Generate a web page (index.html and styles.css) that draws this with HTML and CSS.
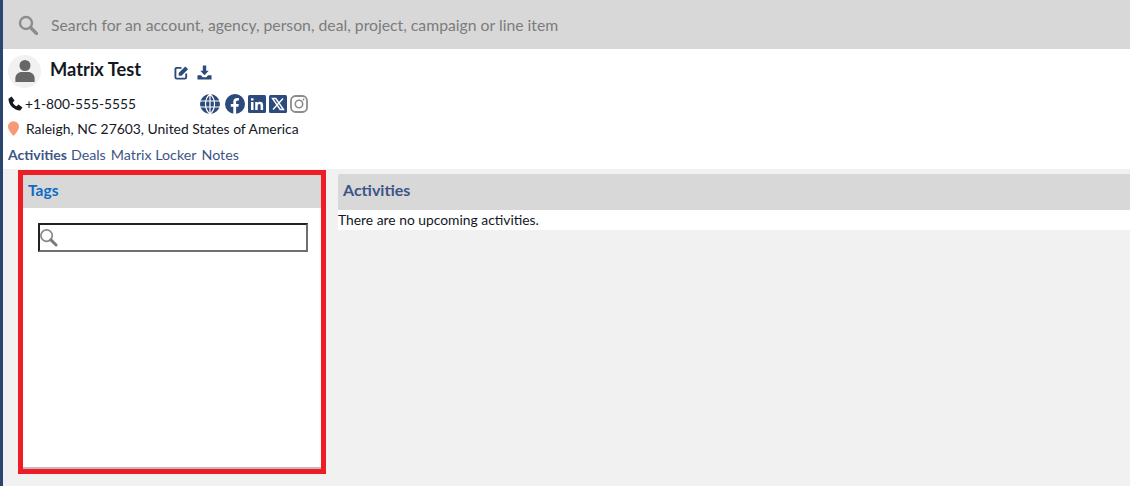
FILE: index.html
```html
<!DOCTYPE html>
<html lang="en">
<head>
<meta charset="utf-8">
<title>Matrix Test</title>
<link rel="stylesheet" href="styles.css">
</head>
<body>
<div class="shell">
  <div class="searchbar">
    <svg class="search-icon" viewBox="0 0 20 20" width="20" height="20"><circle cx="8" cy="8" r="6" fill="none" stroke="#8c8c8c" stroke-width="2.4"/><path d="M12.5 12.5L18.5 18.5" stroke="#8c8c8c" stroke-width="3.2" stroke-linecap="round"/></svg>
    <span class="search-text">Search for an account, agency, person, deal, project, campaign or line item</span>
  </div>
  <div class="profile">
    <div class="name-row">
      <div class="avatar">
        <svg viewBox="0 0 24 26" width="22" height="24"><circle cx="12" cy="7" r="6" fill="#666"/><path d="M1.5 25v-4c0-4.500 3.500-7 7-7h7c3.500 0 7 2.500 7 7v4z" fill="#666"/></svg>
      </div>
      <h1 class="name">Matrix Test</h1>
      <div class="actions">
        <svg viewBox="0 0 16 16" width="15" height="15"><path d="M8 3H3a1.500 1.500 0 0 0-1.500 1.500v8.500A1.500 1.500 0 0 0 3 14.500h8.500A1.500 1.500 0 0 0 13 13V9" fill="none" stroke="#2c4a7c" stroke-width="2"/><path d="M5 8.500L12 1.500l3 3L8 11.500H5z" fill="#2c4a7c"/></svg>
        <svg viewBox="0 0 16 16" width="15" height="15"><path d="M6.200 .5h3.600v5.500h2.700L8 10.800 3.500 6h2.700z" fill="#2c4a7c"/><path d="M.5 11h3.800L6 13h4l1.700-2h3.800v4.500H.5z" fill="#2c4a7c"/></svg>
      </div>
    </div>
    <div class="contact-row">
      <div class="phone">
        <svg viewBox="0 0 16 16" width="15" height="15"><path d="M.5 3L3.800.5l3.200 4.300-2 2c.8 1.800 2.400 3.400 4.200 4.200l2-2 4.300 3.200-2.500 3.300C6.500 15.500.5 9.500.5 3z" fill="#14181f"/></svg>
        <span>+1-800-555-5555</span>
      </div>
      <div class="socials">
        <svg class="globe" viewBox="0 0 20 20" width="20" height="20"><circle cx="10" cy="10" r="10" fill="#2c4a7c"/><path d="M0 7h20M0 13h20M10 0v20M10 0c-6 5-6 15 0 20M10 0c6 5 6 15 0 20" fill="none" stroke="#fff" stroke-width="1.200"/></svg>
        <svg viewBox="0 0 20 20" width="20" height="20"><circle cx="10" cy="10" r="10" fill="#2c4a7c"/><path d="M8.300 20v-7.300H5.800V10h2.500V7.800c0-2.500 1.500-3.800 3.700-3.800 1 0 1.900.1 1.900.1v2.400h-1.200c-1.200 0-1.600.8-1.600 1.500V10h2.700l-.5 2.700h-2.200V20z" fill="#fff"/></svg>
        <svg viewBox="0 0 18 18" width="18" height="18"><rect width="18" height="18" rx="1.500" fill="#2c4a7c"/><path d="M3 7h2.500v8H3zM3 3.200h2.500v2.300H3zM7.200 7h2.400v1.100c.5-.8 1.400-1.300 2.500-1.300 2.300 0 3 1.500 3 3.700V15h-2.500v-4c0-1.100-.3-2-1.300-2-1.100 0-1.600.9-1.600 2v4H7.200z" fill="#fff"/></svg>
        <svg viewBox="0 0 18 18" width="18" height="18"><rect width="18" height="18" rx="1.500" fill="#2c4a7c"/><path d="M3.500 3.500h3.300l7.700 11h-3.300zM14 3.500L4 14.500" fill="none" stroke="#fff" stroke-width="1.400"/></svg>
        <svg viewBox="0 0 18 18" width="18" height="18"><rect x="1" y="1" width="16" height="16" rx="4.500" fill="none" stroke="#8c8c8c" stroke-width="1.800"/><circle cx="9" cy="9" r="3.700" fill="none" stroke="#8c8c8c" stroke-width="1.600"/><circle cx="13.500" cy="4.500" r="1" fill="#8c8c8c"/></svg>
      </div>
    </div>
    <div class="address-row">
      <svg viewBox="0 0 12 16" width="11" height="15"><path d="M6 0a6 6 0 0 1 6 6c0 3.500-4 8-6 10-2-2-6-6.500-6-10a6 6 0 0 1 6-6z" fill="#f79a78"/></svg>
      <span>Raleigh, NC 27603, United States of America</span>
    </div>
    <nav class="tabs">
      <a class="tab active">Activities</a>
      <a class="tab">Deals</a>
      <a class="tab">Matrix Locker</a>
      <a class="tab">Notes</a>
    </nav>
  </div>
  <div class="content">
    <section class="tags-frame">
      <div class="tags-card">
        <h2 class="tags-title">Tags</h2>
        <div class="tags-body">
          <div class="tag-input">
            <svg class="tag-icon" viewBox="0 0 20 20" width="19" height="19"><circle cx="8" cy="8" r="6" fill="none" stroke="#8a8a8a" stroke-width="1.800"/><path d="M12.500 12.500L18 18" stroke="#7a7a7a" stroke-width="3" stroke-linecap="round"/></svg>
          </div>
        </div>
      </div>
    </section>
    <section class="activities">
      <h2 class="activities-title">Activities</h2>
      <p class="activities-empty">There are no upcoming activities.</p>
    </section>
  </div>
</div>
</body>
</html>
```
FILE: styles.css
```css
* { box-sizing: border-box; }
html, body { margin: 0; padding: 0; background: #fff; }
body { font-family: Lato, "Open Sans", sans-serif; color: #111; overflow: hidden; }
.shell { width: 1130px; height: 486px; border-left: 3px solid #2c4570; display: flex; flex-direction: column; }
.searchbar { height: 49px; flex: none; background: #d8d8d8; display: flex; align-items: center; padding-left: 15px; gap: 13px; }
.search-icon { flex: none; }
.search-text { font-size: 15.750px; color: #7c7c7c; }
.profile { height: 120px; flex: none; background: #fff; padding: 5px 0 0 5px; }
.name-row { height: 34px; display: flex; align-items: center; }
.avatar { width: 33px; height: 33px; border-radius: 50%; background: #f1f1f1; display: flex; align-items: center; justify-content: center; }
.name { margin: 0 0 4px 9px; width: 124px; font-size: 18.250px; font-weight: 700; color: #14181f; }
.actions { display: flex; gap: 8px; padding-top: 3px; }
.contact-row { height: 27px; margin-top: 2px; display: flex; align-items: center; }
.phone { width: 192px; display: flex; align-items: center; gap: 2px; font-size: 13.750px; color: #14181f; }
.socials { display: flex; align-items: center; gap: 3px; }
.globe { margin-right: 2px; }
.address-row { height: 24px; margin-top: -1px; display: flex; align-items: center; gap: 7px; font-size: 13.900px; color: #14181f; }
.tabs { display: flex; gap: 5px; margin-top: 4px; font-size: 14.250px; color: #3c5585; height: 20px; align-items: center; }
.tab.active { font-size: 14px; font-weight: 700; margin-right: -1px; }
.content { flex: 1; background: #f1f1f1; display: flex; align-items: flex-start; min-height: 0; }
.tags-frame { width: 308px; height: 304px; margin: 1px 0 0 15px; border: 5px solid #ee1c25; flex: none; }
.tags-card { height: 100%; background: #fff; border-bottom: 2px solid #bdbdbd; }
.tags-title { margin: 0; height: 33px; background: #d8d8d8; font-size: 15.500px; font-weight: 700; color: #0f6cc4; padding-left: 5px; line-height: 31px; }
.tags-body { padding: 15px 13px 0 15px; }
.tag-input { height: 29px; border: 2px solid; border-color: #222 #6f6f6f #6f6f6f #222; background: #fff; display: flex; align-items: center; }
.tag-icon { margin-left: -1px; }
.activities { flex: 1; margin: 5px 0 0 12px; min-width: 0; }
.activities-title { margin: 0; height: 36px; background: #d8d8d8; font-size: 16px; font-weight: 700; color: #3c5585; padding-left: 5px; line-height: 32px; border-radius: 2px 0 0 0; }
.activities-empty { margin: 0; height: 20px; background: #fff; font-size: 13.850px; line-height: 20px; color: #14181f; }
```
